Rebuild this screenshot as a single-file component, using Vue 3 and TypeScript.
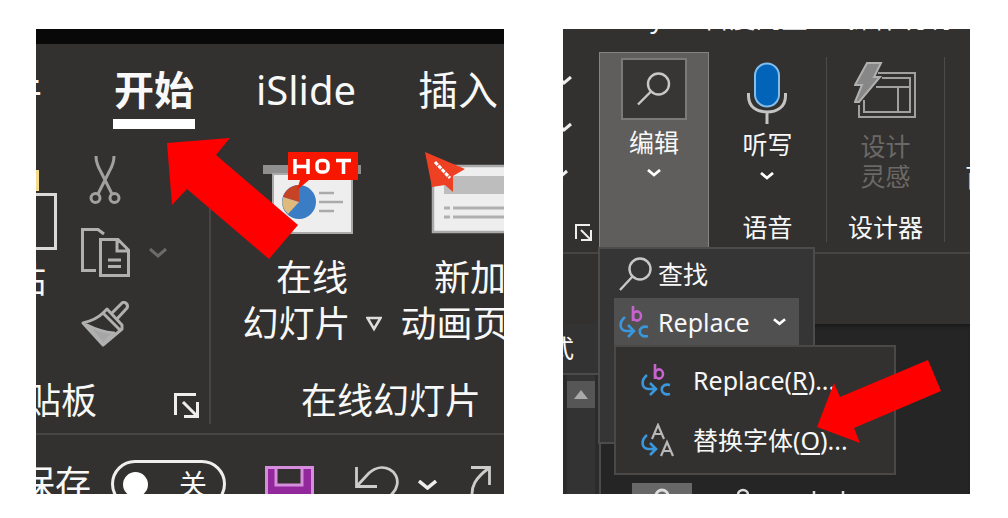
<script setup lang="ts">
import { ref } from 'vue'

interface Tab {
  label: string
  kind: 'file' | 'current' | 'plain'
}

const tabs: Tab[] = [
  { label: '文件', kind: 'file' },
  { label: '开始', kind: 'current' },
  { label: 'iSlide', kind: 'plain' },
  { label: '插入', kind: 'plain' },
]

const autoSave = ref(false)
</script>

<template>
  <main class="page">
    <section class="panel panel-left">
      <div class="title-strip"></div>
      <nav class="tabs">
        <button v-for="tab in tabs" :key="tab.label" type="button" class="tab" :class="tab.kind">{{ tab.label }}</button>
      </nav>

      <div class="ribbon">
        <div class="group clipboard">
          <div class="tools">
            <button type="button" class="paste">
              <svg width="21" height="82" viewBox="0 0 21 82" fill="none">
                <path d="M0 1H3V22H0Z" fill="#f5dc8c" />
                <path d="M-8 25.500H19.500V79.500H-8" stroke="#dadada" stroke-width="3" />
              </svg>
              <span>粘贴</span>
            </button>
            <div class="small-tools">
              <button type="button" class="cut" aria-label="剪切">
                <svg width="32" height="49" viewBox="0 0 32 49" fill="none" stroke="#a0a0a0" stroke-width="3">
                  <path d="M7 1C7 8 9 12 12 17L23 39M25 1C25 8 23 12 20 17L9 39" />
                  <circle cx="6.500" cy="43" r="4.500" />
                  <circle cx="25.500" cy="43" r="4.500" />
                </svg>
              </button>
              <button type="button" class="copy" aria-label="复制">
                <svg width="49" height="49" viewBox="0 0 49 49" fill="none" stroke="#b0b0b0" stroke-width="3">
                  <path d="M15 42.500H1.500V1.500H17L23 6" />
                  <path d="M19.500 11.500H37L47.500 22V47.500H19.500ZM36 12V23H47M27 32H40M27 38.500H40" />
                </svg>
                <svg width="18" height="10" viewBox="0 0 18 10" fill="none" stroke="#6c6b69" stroke-width="3">
                  <path d="M1 1L9 8L17 1" />
                </svg>
              </button>
              <button type="button" aria-label="格式刷">
                <svg width="49" height="47" viewBox="0 0 49 47" fill="none" stroke="#b0b0b0" stroke-width="3" stroke-linejoin="round">
                  <path d="M22 12L26 8L41 24V28L22 44L2 22C10 20 17 17 22 12ZM22 12L39 29" />
                  <path d="M30 13L41 2C43 0 48 3 46 7L35 19" />
                  <path d="M6 24C16 29 22 31 33 32L22 43Z" fill="#a6a6a6" />
                </svg>
              </button>
            </div>
          </div>
          <div class="clip-footer">
            <span>剪贴板</span>
            <button type="button" aria-label="剪贴板选项">
              <svg width="26" height="26" viewBox="0 0 26 26" fill="none" stroke="#eee" stroke-width="3">
                <path d="M22 1.500H1.500V22M9 9L22 22M23.500 9V23.500H10" />
              </svg>
            </button>
          </div>
        </div>

        <div class="group slides">
          <div class="big-tools">
            <button type="button" class="big">
              <svg width="98" height="82" viewBox="0 0 98 82">
                <path d="M0 13H98V22H0Z" fill="#8f8f8f" />
                <path d="M10 22H89V81H10Z" fill="#eee" stroke="#aaa" stroke-width="2" />
                <circle cx="36" cy="50" r="17" fill="#3b7dc4" />
                <path d="M36 50V33A17 17 0 0 0 20 45Z" fill="#c74325" />
                <path d="M36 50L20 45A17 17 0 0 0 25 62Z" fill="#dfba7c" />
                <path d="M56 41H71M56 50H80M56 59H71" stroke="#aaa" stroke-width="2.500" />
                <path d="M25 0H95V28H46L34 38L37 28H25Z" fill="#f71700" />
                <g fill="none" stroke="#fff" stroke-width="3.500">
                  <path d="M32 7V22M45 7V22M32 14.500H45M73 8.500H88M80.500 8V22" />
                  <rect x="54" y="8.500" width="11" height="11.500" rx="4" />
                </g>
              </svg>
              <span>在线</span>
              <span class="with-arrow">幻灯片
                <svg width="16" height="16" viewBox="0 0 16 16" fill="none" stroke="#ddd" stroke-width="2.500"><path d="M1.500 2H14.500L8 13Z" /></svg>
              </span>
            </button>
            <button type="button" class="big">
              <svg width="90" height="82" viewBox="0 0 90 82">
                <path d="M8 14H90V80H8Z" fill="#eee" stroke="#aaa" stroke-width="2.500" />
                <path d="M19 24H90V42H19Z" fill="#bdbdbd" />
                <path d="M19 56H25M28 56H90M19 65H25M28 65H90" stroke="#b0b0b0" stroke-width="3" />
                <path d="M0 0L40 17L28 24V40L20 33L7 35Z" fill="#ee4023" />
                <path d="M10 10L25 26" stroke="#fff" stroke-width="3" stroke-dasharray="4 1" />
              </svg>
              <span>新加</span>
              <span class="with-arrow">动画页
                <svg width="16" height="16" viewBox="0 0 16 16" fill="none" stroke="#ddd" stroke-width="2.500"><path d="M1.500 2H14.500L8 13Z" /></svg>
              </span>
            </button>
          </div>
          <div class="slides-footer">在线幻灯片</div>
        </div>
      </div>

      <div class="quick">
        <label class="autosave" for="autosave">
          <span>自动保存</span>
          <span class="switch"><input id="autosave" v-model="autoSave" type="checkbox" /><span>关</span></span>
        </label>
        <button type="button" class="save" aria-label="保存">
          <svg width="49" height="49" viewBox="0 0 49 49">
            <path d="M1.500 1.500H47.500V47.500H8L1.500 41Z" fill="#93279c" stroke="#d78ddd" stroke-width="3" />
            <path d="M11 1.500H37V19H11Z" fill="#32312f" stroke="#d78ddd" stroke-width="3" />
          </svg>
        </button>
        <button type="button" class="undo" aria-label="撤消">
          <svg width="44" height="44" viewBox="0 0 44 44" fill="none" stroke="#ccc" stroke-width="2.800">
            <path d="M1.500 1V20.500H22M2 20L14 7C28 -5 45 5 42 19C41 25 37 29 20 43" />
          </svg>
          <svg class="undo-arrow" width="19" height="10" viewBox="0 0 19 10" fill="none" stroke="#eee" stroke-width="3.500"><path d="M1 1L9.500 8L18 1" /></svg>
        </button>
        <button type="button" aria-label="恢复">
          <svg width="22" height="44" viewBox="0 0 22 44" fill="none" stroke="#ccc" stroke-width="2.800">
            <path d="M1 1.500H19.500V19M19 2C4 13 2 21 2 28C2 37 10 43 18 43" />
          </svg>
        </button>
      </div>

      <svg class="pointer pointer-left" width="131" height="121" viewBox="0 0 131 121"><path d="M0 5L63 0L49 17L131 87L102 121L20 51L5 67Z" fill="#f00" /></svg>
    </section>

    <section class="panel panel-right">
      <nav class="cut-tabs">
        <button type="button">OneKey</button>
        <button type="button">百度网盘</button>
        <button type="button">操作说明</button>
      </nav>

      <div class="commands">
        <div class="paragraph">
          <svg width="9" height="102" viewBox="0 0 9 102" fill="none" stroke="#eee" stroke-width="3">
            <path d="M-5 1L1 7L8 1M-5 48L1 54L8 48M-9 95L-3 101L4 95" />
          </svg>
          <button type="button" aria-label="段落选项">
            <svg width="17" height="17" viewBox="0 0 17 17" fill="none" stroke="#eee" stroke-width="2"><path d="M15 1H1V15M6 6L15 15M16 6V16H6" /></svg>
          </button>
        </div>

        <button type="button" class="edit">
          <span class="edit-icon">
            <svg width="34" height="34" viewBox="0 0 34 34" fill="none" stroke="#c8c8c8" stroke-width="2.400"><circle cx="21.500" cy="12" r="10.500" /><path d="M14 19.500L1 32.500" /></svg>
          </span>
          <span>编辑</span>
          <svg width="14" height="8" viewBox="0 0 14 8" fill="none" stroke="#fff" stroke-width="2.800"><path d="M1 1L7 6L13 1" /></svg>
        </button>

        <div class="command-group voice">
          <button type="button">
            <svg width="40" height="62" viewBox="0 0 40 62" fill="none">
              <rect x="8" y="1.500" width="24" height="43" rx="12" fill="#0164b8" stroke="#83bdec" stroke-width="2" />
              <path d="M1.500 31V34C1.500 45 10 50 20 50S38.500 45 38.500 34V31M20 50V62" stroke="#c4c4c4" stroke-width="3" />
            </svg>
            <span>听写</span>
            <svg width="14" height="8" viewBox="0 0 14 8" fill="none" stroke="#fff" stroke-width="2.800"><path d="M1 1L7 6L13 1" /></svg>
          </button>
          <span>语音</span>
        </div>

        <div class="command-group designer">
          <button type="button" disabled>
            <svg width="63" height="57" viewBox="0 0 63 57" fill="none" stroke="#a0a0a0" stroke-width="2">
              <path d="M24 11H61V55H5V43M28 16H56V50H10V38M22 25H56M44 25V50" />
              <path d="M13 1H27L20 15H26L5 40H1L8 23H1Z" fill="#878787" stroke="#b0b0b0" />
            </svg>
            <span>设计<br />灵感</span>
          </button>
          <span>设计器</span>
        </div>
        <div class="netdisk">百度</div>
      </div>

      <div class="under-ribbon"></div>
      <div class="workspace">
        <aside class="side">
          <div class="side-title">式</div>
          <div class="track">
            <button type="button" aria-label="向上滚动"><svg width="14" height="9" viewBox="0 0 14 9"><path d="M0 9L7 0L14 9Z" fill="#aaa" /></svg></button>
          </div>
        </aside>
        <div class="canvas">
          <div class="thumb"><svg width="16" height="16" viewBox="0 0 16 16" fill="none" stroke="#ddd" stroke-width="3"><circle cx="8" cy="8" r="6" /></svg></div>
          <svg width="120" height="16" viewBox="0 0 120 16" fill="none" stroke="#ddd" stroke-width="2.500"><circle cx="13" cy="12" r="5" /><path d="M84 8V16M113 8V16" /></svg>
        </div>
      </div>

      <div class="menu">
        <button type="button" class="menu-row">
          <svg width="34" height="34" viewBox="0 0 34 34" fill="none" stroke="#c8c8c8" stroke-width="2.400"><circle cx="21" cy="12" r="10.500" /><path d="M13.500 19.500L1 33" /></svg>
          <span>查找</span>
        </button>
        <button type="button" class="menu-row active">
          <svg width="34" height="34" viewBox="0 0 34 34" fill="none" stroke-width="2.600">
            <path d="M14 1V16" stroke="#c763cf" /><ellipse cx="18" cy="11" rx="4" ry="4.600" stroke="#c763cf" />
            <path d="M6 12C0 17 0 25 7 26H15M9 20L15 26L9 32" stroke="#3b97db" /><path d="M29 22C18 19 18 34 29 31" stroke="#3b97db" />
          </svg>
          <span>Replace</span>
          <svg class="row-arrow" width="13" height="8" viewBox="0 0 14 8" fill="none" stroke="#fff" stroke-width="2.800"><path d="M1 1L7 6L13 1" /></svg>
        </button>
        <div class="submenu">
          <button type="button" class="sub-row">
            <svg width="34" height="34" viewBox="0 0 34 34" fill="none" stroke-width="2.600">
              <path d="M14 1V16" stroke="#c763cf" /><ellipse cx="18" cy="11" rx="4" ry="4.600" stroke="#c763cf" />
              <path d="M6 12C0 17 0 25 7 26H15M9 20L15 26L9 32" stroke="#3b97db" /><path d="M29 22C18 19 18 34 29 31" stroke="#3b97db" />
            </svg>
            <span>Replace(<u>R</u>)...</span>
          </button>
          <button type="button" class="sub-row">
            <svg width="34" height="34" viewBox="0 0 34 34" fill="none" stroke-width="2.600">
              <path d="M6 12C0 17 0 25 7 26H15M9 20L15 26L9 32" stroke="#3b97db" />
              <path d="M11 16L17 2L23 16M13 11H21M20 33L26 19L32 33M22 28H30" stroke="#b8b8b8" stroke-width="2.200" />
            </svg>
            <span>替换字体(<u>O</u>)...</span>
          </button>
        </div>
      </div>

      <svg class="pointer pointer-right" width="124" height="83" viewBox="0 0 124 83"><path d="M0 67L17 23L23 37L111 0L124 31L37 68L43 83Z" fill="#f00" /></svg>
    </section>
  </main>
</template>

<style>
body {
  margin: 0;
  background: #fff;
}
</style>

<style scoped>
.page {
  box-sizing: border-box;
  height: 100vh;
  padding: 29px 38px 24px 36px;
  display: grid;
  grid-template-columns: 468fr 407fr;
  gap: 59px;
  font-family: "Noto Sans", "Noto Sans CJK SC", sans-serif;
  color: #f8f8f8;
}
button {
  border: 0;
  padding: 0;
  background: none;
  color: inherit;
  font: inherit;
  white-space: nowrap;
}
svg {
  display: block;
  flex: none;
}
.panel {
  position: relative;
  overflow: hidden;
  min-width: 0;
  display: flex;
  flex-direction: column;
  background: #32312f;
}
.panel > * {
  flex-shrink: 0;
}
.pointer {
  position: absolute;
}
.pointer-left {
  left: 131px;
  top: 109px;
}
.pointer-right {
  left: 254px;
  top: 331px;
}

/* Left panel */
.panel-left {
  font-size: 36px;
  line-height: 46px;
}
.title-strip {
  height: 15px;
  background: #080808;
}
.tabs {
  display: flex;
  gap: 60px;
  margin-left: -75px;
  padding-top: 17px;
}
.tab {
  flex: none;
  padding: 0 1px;
  font-size: 40px;
  line-height: 58px;
  border-bottom: 10px solid transparent;
}
.tab.file {
  padding-right: 11px;
}
.tab.current {
  font-weight: 700;
  border-color: #fff;
}
.ribbon {
  display: flex;
  padding: 21px 0 9px;
  border-bottom: 2px solid #464543;
}
.group {
  flex: none;
  display: flex;
  flex-direction: column;
  justify-content: space-between;
}
.clipboard {
  width: 173px;
  border-right: 2px solid #464543;
}
.tools {
  display: flex;
  gap: 24px;
}
.paste {
  width: 21px;
  padding-top: 19px;
  display: flex;
  flex-direction: column;
  align-items: flex-end;
  align-self: flex-start;
  gap: 6px;
}
.paste span {
  padding-right: 11px;
}
.small-tools {
  padding-top: 5px;
  display: flex;
  flex-direction: column;
  align-items: flex-start;
  gap: 24px;
}
.cut {
  padding-left: 8px;
}
.copy {
  display: flex;
  align-items: center;
  gap: 19px;
}
.clip-footer {
  display: flex;
  align-items: center;
  justify-content: space-between;
  margin-left: -47px;
  padding-right: 9px;
}
.clip-footer button {
  padding-top: 10px;
}
.slides {
  padding-left: 31px;
}
.big-tools {
  display: flex;
  gap: 18px;
  padding-top: 2px;
}
.big {
  width: 140px;
  display: flex;
  flex-direction: column;
  align-items: center;
}
.big > svg {
  margin-bottom: 21px;
}
.with-arrow {
  display: flex;
  align-items: center;
  gap: 15px;
}
.slides-footer {
  padding: 31px 0 0 59px;
  white-space: nowrap;
}
.quick {
  display: flex;
  align-items: flex-start;
  margin-left: -89px;
  padding-top: 25px;
}
.quick > button {
  padding-top: 6px;
}
.autosave {
  flex: none;
  display: flex;
  align-items: center;
  gap: 20px;
}
.switch {
  box-sizing: border-box;
  width: 115px;
  height: 48px;
  padding: 0 16px 0 9px;
  display: flex;
  align-items: center;
  justify-content: space-between;
  border: 3px solid #eee;
  border-radius: 24px;
  font-size: 28px;
}
.switch input {
  appearance: none;
  width: 25px;
  height: 25px;
  margin: 0;
  border-radius: 50%;
  background: #fff;
}
.save {
  margin: 0 41px 0 39px;
}
.undo {
  display: flex;
  align-items: flex-start;
  gap: 19px;
  margin-right: 33px;
}
.undo-arrow {
  margin-top: 14px;
}

/* Right panel */
.panel-right {
  font-size: 25px;
  line-height: 30px;
}
.cut-tabs {
  display: flex;
  gap: 40px;
  margin-top: -26px;
  padding: 0 0 19px 6px;
  font-size: 26px;
}
.commands {
  display: flex;
  height: 200px;
  border-bottom: 2px solid #464543;
}
.commands > * {
  flex: none;
}
.paragraph {
  width: 36px;
  padding: 24px 7px 11px 0;
  box-sizing: border-box;
  display: flex;
  flex-direction: column;
  justify-content: space-between;
}
.paragraph button {
  align-self: flex-end;
}
.edit {
  box-sizing: border-box;
  width: 110px;
  padding-top: 5px;
  display: flex;
  flex-direction: column;
  align-items: center;
  background: #5f5e5c;
  border: 1px solid #858482;
}
.edit-icon {
  padding: 12px 14px;
  border: 2px solid #7b7a78;
  background: #373634;
}
.edit > span:nth-child(2) {
  padding: 7px 0 12px;
}
.command-group {
  box-sizing: border-box;
  width: 118px;
  margin: 5px 0 10px;
  display: flex;
  flex-direction: column;
  align-items: center;
  justify-content: space-between;
  border-right: 1px solid #4c4b49;
}
.command-group button {
  padding-top: 5px;
  display: flex;
  flex-direction: column;
  align-items: center;
}
.voice button > span {
  padding: 5px 0 13px;
}
.designer button > span {
  padding-top: 12px;
  color: #6a6967;
}
.netdisk {
  padding: 110px 0 0 20px;
  white-space: nowrap;
}
.under-ribbon {
  height: 70px;
}
.workspace {
  flex: 1;
  display: flex;
  background: #252525;
  box-shadow: inset 0 5px 5px -3px #171717;
}
.side {
  width: 36px;
  display: flex;
  flex-direction: column;
  background: #2b2b2b;
  border-right: 2px solid #4c4b49;
}
.side-title {
  display: flex;
  justify-content: flex-end;
  padding: 9px 25px 10px 0;
  background: #333;
  border-bottom: 2px solid #4c4b49;
}
.track {
  flex: 1;
  margin: 0 4px;
  padding-top: 6px;
  background: #333;
}
.track button {
  width: 100%;
  height: 27px;
  display: flex;
  align-items: center;
  justify-content: center;
  background: #565656;
}
.canvas {
  display: flex;
  align-items: flex-start;
  gap: 38px;
  padding: 159px 0 0 31px;
}
.thumb {
  padding: 5px 22px;
  background: #686868;
}
.menu {
  position: absolute;
  left: 35px;
  top: 218px;
  box-sizing: border-box;
  width: 217px;
  min-height: 197px;
  padding: 1px 14px;
  background: #353535;
  border: 2px solid #4c4c4c;
}
.menu-row {
  width: 100%;
  height: 48px;
  padding: 0 13px 0 5px;
  display: flex;
  align-items: center;
  gap: 5px;
}
.menu-row.active {
  background: #505050;
}
.row-arrow {
  margin-left: auto;
}
.submenu {
  position: absolute;
  left: 14px;
  top: 96px;
  box-sizing: border-box;
  width: 282px;
  padding: 3px 0;
  background: #32312f;
  border: 2px solid #4a4947;
}
.sub-row {
  width: 100%;
  height: 60px;
  padding-left: 25px;
  display: flex;
  align-items: center;
  gap: 18px;
}
u {
  text-underline-offset: 3px;
}
</style>
